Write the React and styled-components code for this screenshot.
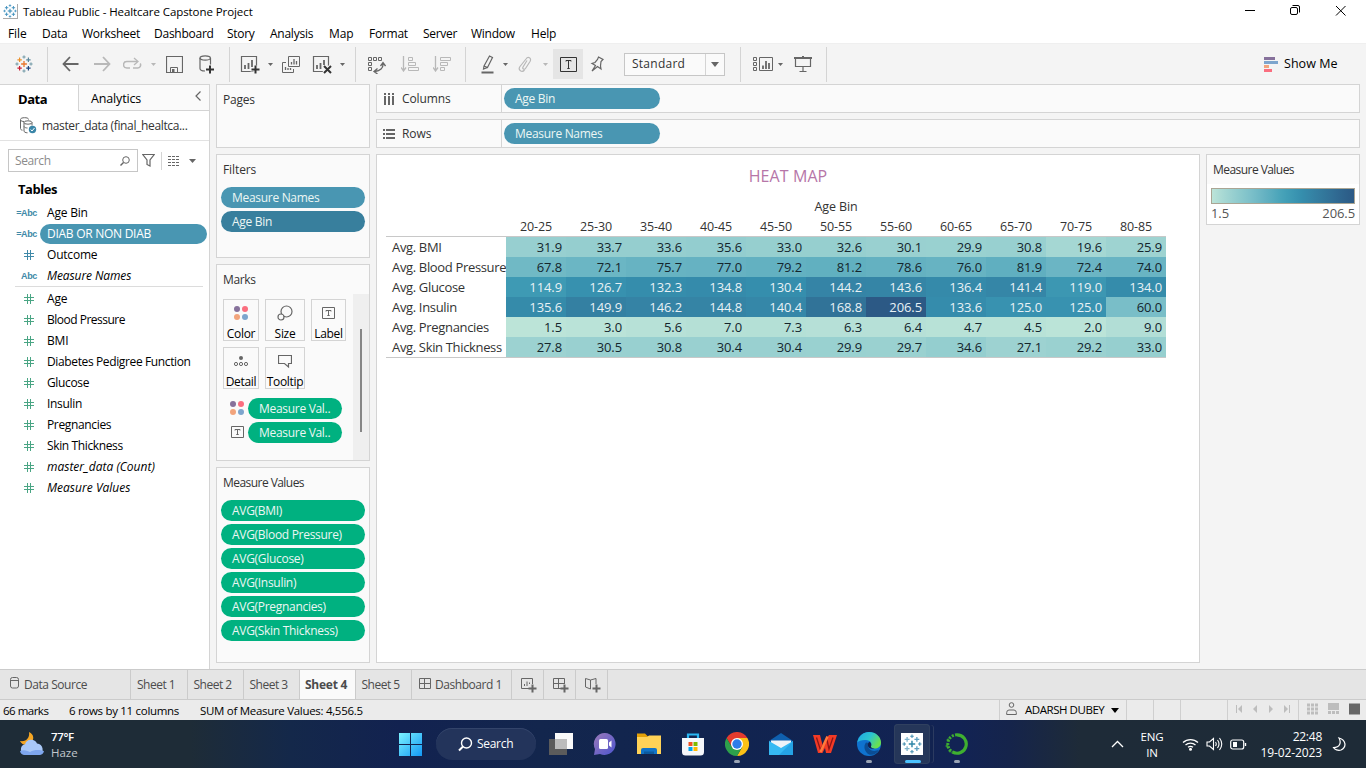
import React from "react";
import styled, { createGlobalStyle, css } from "styled-components";

const GlobalStyle = createGlobalStyle`
  * { box-sizing: border-box; }
  body { margin: 0; background: #f4f4f4; overflow: hidden; }
  svg { display: block; flex: none; }
`;

const LINE = "#d4d4d4";
const INK = "#666";

const Window = styled.div`
  width: 1366px;
  height: 768px;
  display: flex;
  flex-direction: column;
  background: #f4f4f4;
  color: #000;
  font: 12px/16px "Open Sans", "Noto Sans", sans-serif;
  letter-spacing: -0.2px;
  white-space: nowrap;
`;

/* ---------- text ---------- */
const Label = styled.span`
  flex: none;
  font-size: ${(p) => p.$size || 12}px;
  font-weight: ${(p) => p.$weight || 400};
  letter-spacing: ${(p) => (p.$track === undefined ? -0.2 : p.$track)}px;
  color: ${(p) => p.$color || "inherit"};
  margin-left: ${(p) => p.$ml || 0}px;
`;

/* ---------- title and menu ---------- */
const TitleBar = styled.header`
  height: 24px;
  flex: none;
  display: flex;
  align-items: center;
  padding: 0 2px 0 3px;
  background: #fff;
`;
const AppIcon = styled.span`
  width: 15px;
  height: 15px;
  margin: 0 5px 1px 0;
  display: grid;
  place-items: center;
  border-right: 1px solid #aaa;
  border-bottom: 1px solid #aaa;
`;
const WindowButtons = styled.div`
  margin-left: auto;
  display: flex;
  align-self: flex-start;
  svg { width: 46px; height: 22px; }
`;
const MenuBar = styled.nav`
  height: 19px;
  flex: none;
  display: flex;
  align-items: center;
  padding: 1px 0 0 8px;
  background: #fff;
`;
const MenuItem = styled.span`
  width: ${(p) => p.$w}px;
  letter-spacing: ${(p) => p.$track}px;
`;

/* ---------- toolbar ---------- */
const Toolbar = styled.div`
  height: 41px;
  flex: none;
  display: flex;
  align-items: center;
  background: #f4f4f4;
  border-top: 1px solid #efefef;
`;
const Separator = styled.span`
  width: 1px;
  height: 35px;
  flex: none;
  margin-left: ${(p) => p.$ml || 0}px;
  background: ${LINE};
`;
const Glyph = styled.svg`
  margin-left: ${(p) => p.$ml || 0}px;
  margin-top: ${(p) => p.$mt || 0}px;
  fill: none;
  stroke: ${(p) => p.$color || INK};
`;
const Brand = styled.span`
  flex: none;
  margin-left: 15px;
`;
const ToggleButton = styled.span`
  width: 30px;
  height: 30px;
  margin-left: 5px;
  flex: none;
  display: grid;
  place-items: center;
  background: #e5e5e5;
`;
const FitSelect = styled.div`
  width: 101px;
  height: 23px;
  margin-left: 20px;
  flex: none;
  display: flex;
  align-items: center;
  border: 1px solid #c6c6c6;
  background: #fafafa;
  color: #333;
`;
const SelectArrow = styled.span`
  margin-left: auto;
  width: 19px;
  height: 21px;
  display: grid;
  place-items: center;
  border-left: 1px solid ${LINE};
`;

/* ---------- workspace ---------- */
const Workspace = styled.main`
  height: 585px;
  flex: none;
  display: flex;
`;
const Sidebar = styled.aside`
  width: 210px;
  flex: none;
  background: #fff;
  border-top: 1px solid ${LINE};
  border-right: 1px solid ${LINE};
`;
const SideTabs = styled.div`
  height: 26px;
  display: flex;
`;
const SideTab = styled.div`
  flex: ${(p) => (p.$active ? "0 0 78px" : "1")};
  display: flex;
  align-items: center;
  padding: ${(p) => (p.$active ? "1px 0 0 18px" : "3px 6px 0 12px")};
  ${(p) =>
    !p.$active &&
    css`
      background: #fafafa;
      border-left: 1px solid ${LINE};
      border-bottom: 1px solid ${LINE};
    `}
`;
const SourceRow = styled.div`
  height: 30px;
  display: flex;
  align-items: center;
  padding-left: 19px;
  border-bottom: 1px solid #e2e2e2;
  color: #333;
`;
const SearchRow = styled.div`
  display: flex;
  align-items: center;
  padding: 8px 0 0 8px;
`;
const SearchBox = styled.div`
  width: 130px;
  height: 23px;
  display: flex;
  align-items: center;
  justify-content: space-between;
  padding: 0 7px 0 6px;
  border: 1px solid #c6c6c6;
  color: #8b8b8b;
  letter-spacing: -0.4px;
`;
const Thin = styled.span`
  width: 1px;
  height: 18px;
  margin-left: ${(p) => p.$ml}px;
  background: ${LINE};
`;
const SectionTitle = styled.div`
  height: 30px;
  padding: 9px 0 0 18px;
  font-size: 13px;
  font-weight: 700;
  letter-spacing: -0.45px;
`;
const Field = styled.div`
  height: 21px;
  display: flex;
  align-items: center;
  font-style: ${(p) => (p.$italic ? "italic" : "normal")};
`;
const FieldIcon = styled.span`
  width: 40px;
  flex: none;
  display: flex;
  justify-content: flex-end;
  padding-right: ${(p) => (p.$hash ? 6 : 3)}px;
  font: 700 9px/12px "Liberation Sans", sans-serif;
  letter-spacing: -0.35px;
  color: #4089a8;
`;
const FieldName = styled.span`
  height: 20px;
  line-height: 20px;
  padding-left: 7px;
  letter-spacing: ${(p) => p.$track}px;
  ${(p) =>
    p.$selected &&
    css`
      width: 167px;
      border-radius: 10px;
      background: #4996b2;
      color: #fff;
    `}
`;
const FieldRule = styled.div`
  height: 1px;
  margin: 0 6px 1px 15px;
  background: #dcdcdc;
`;

/* ---------- cards ---------- */
const CardColumn = styled.section`
  width: 154px;
  flex: none;
  margin-left: 6px;
  display: flex;
  flex-direction: column;
  gap: 6px;
`;
const Card = styled.div`
  height: ${(p) => p.$h}px;
  flex: none;
  border: 1px solid ${LINE};
  background: #fafafa;
`;
const CardTitle = styled.div`
  height: 32px;
  padding: 7px 0 0 6px;
  color: #333;
  letter-spacing: ${(p) => (p.$track === undefined ? -0.2 : p.$track)}px;
`;
const PillStack = styled.div`
  display: flex;
  flex-direction: column;
  gap: 3px;
  padding-left: 4px;
`;
const Pill = styled.span`
  width: ${(p) => p.$w || 144}px;
  height: 21px;
  flex: none;
  padding: 3px 0 0 11px;
  border-radius: 11px;
  background: ${(p) => p.$bg || "#00b180"};
  color: #ecf6f4;
  letter-spacing: -0.3px;
`;
const MarksBody = styled.div`
  height: 163px;
  display: flex;
  justify-content: space-between;
`;
const MarksMain = styled.div`
  padding: 2px 0 0 6px;
`;
const MarkGrid = styled.div`
  display: grid;
  grid-template-columns: 36px 40px 35px;
  grid-auto-rows: 42px;
  gap: 6px;
`;
const MarkButton = styled.div`
  display: flex;
  flex-direction: column;
  align-items: center;
  justify-content: space-between;
  border: 1px solid ${LINE};
  padding-top: 5px;
  line-height: 13px;
  letter-spacing: -0.3px;
`;
const MarkRow = styled.div`
  height: 24px;
  display: flex;
  align-items: center;
  gap: 3px;
  padding-left: 6px;
`;
const MarkRows = styled.div`
  padding-top: 7px;
`;
const MarkKind = styled.span`
  width: 16px;
  display: grid;
  place-items: center;
`;
const ScrollTrack = styled.div`
  width: 16px;
  margin-top: -3px;
  height: 166px;
  padding: 35px 0 0 7px;
  background: #efefef;
`;
const ScrollThumb = styled.div`
  width: 2px;
  height: 103px;
  background: #868686;
`;

/* ---------- shelves and view ---------- */
const ViewColumn = styled.section`
  width: 984px;
  margin-left: 6px;
  display: flex;
  flex-direction: column;
  gap: 6px;
`;
const Shelf = styled.div`
  height: 29px;
  flex: none;
  display: flex;
  align-items: center;
  border: 1px solid ${LINE};
  background: #fafafa;
  color: #333;
`;
const ShelfName = styled.div`
  width: 125px;
  height: 27px;
  margin-right: 2px;
  display: flex;
  align-items: center;
  gap: 7px;
  padding-left: 6px;
  border-right: 1px solid ${LINE};
`;
const ShelvesPair = styled.div`
  display: flex;
  flex-direction: column;
  gap: 6px;
`;
const ViewRow = styled.div`
  display: flex;
  align-items: flex-start;
  gap: 6px;
`;
const Sheet = styled.div`
  width: 824px;
  height: 509px;
  border: 1px solid ${LINE};
  background: #fff;
  padding: 10px 0 0 9px;
`;
const SheetTitle = styled.h1`
  margin: 0 0 0 -9px;
  height: 34px;
  font-size: 16px;
  font-weight: 400;
  line-height: 22px;
  letter-spacing: 0.1px;
  text-align: center;
  color: #b676a8;
`;
const Crosstab = styled.div`
  width: 780px;
  font-size: 13px;
  line-height: 20px;
  letter-spacing: -0.1px;
  color: #333;
`;
const AxisTitle = styled.div`
  height: 18px;
  line-height: 16px;
  margin-left: 120px;
  text-align: center;
  font-size: 12.5px;
`;
const TabRow = styled.div`
  display: grid;
  grid-template-columns: 120px repeat(11, 60px);
  height: ${(p) => (p.$head ? 19 : 20)}px;
`;
const HeadCell = styled.span`
  text-align: center;
  line-height: 19px;
  font-size: 12.5px;
`;
const Grid = styled.div`
  border-top: 1px solid #c8c8c8;
  border-bottom: 1px solid #c8c8c8;
`;
const RowLabel = styled.span`
  padding-left: 6px;
  line-height: 20px;
  letter-spacing: -0.34px;
`;
const Cell = styled.span`
  padding-right: 4px;
  line-height: 20px;
  text-align: right;
  background: ${(p) => p.$bg};
  color: ${(p) => (p.$light ? "#e8f1f5" : "#14252c")};
`;
const Legend = styled.div`
  width: 154px;
  height: 71px;
  border: 1px solid ${LINE};
  background: #fff;
`;
const LegendTitle = styled.div`
  height: 29px;
  padding: 7px 6px 0;
  background: #fafafa;
  color: #333;
  letter-spacing: -0.55px;
`;
const LegendRamp = styled.div`
  height: 16px;
  margin: 4px 4px 0;
  border: 1px solid #aaa594;
  background: linear-gradient(90deg, ${(p) => p.$stops.join(",")});
`;
const LegendEnds = styled.div`
  display: flex;
  justify-content: space-between;
  padding: 1px 4px;
  font-size: 13px;
  letter-spacing: -0.1px;
  color: #555;
`;

/* ---------- sheet tabs and status ---------- */
const SheetTabs = styled.div`
  height: 31px;
  flex: none;
  display: flex;
  border-top: 1px solid #cbcbcb;
  border-bottom: 1px solid #cbcbcb;
  background: #e5e5e5;
`;
const SheetTab = styled.div`
  width: ${(p) => p.$w}px;
  flex: none;
  display: flex;
  align-items: center;
  padding-left: ${(p) => p.$pad}px;
  border-right: 1px solid #cbcbcb;
  color: #4c4c4c;
  letter-spacing: -0.5px;
  ${(p) =>
    p.$active &&
    css`
      background: #fafafa;
      font-weight: 700;
      letter-spacing: -0.25px;
    `}
`;
const StatusBar = styled.div`
  height: 20px;
  flex: none;
  display: flex;
  align-items: center;
  padding-left: 3px;
  background: #ebebeb;
`;
const StatusText = styled.span`
  width: ${(p) => p.$w}px;
  padding-top: 2px;
  font-size: 11.5px;
  letter-spacing: ${(p) => p.$track}px;
`;
const StatusCell = styled.div`
  width: ${(p) => p.$w}px;
  height: 20px;
  display: flex;
  align-items: center;
  border-left: 1px solid #cfcfcf;
`;
const StatusRight = styled.div`
  margin-left: auto;
  display: flex;
`;

/* ---------- taskbar ---------- */
const Taskbar = styled.footer`
  height: 48px;
  flex: none;
  display: flex;
  align-items: center;
  background: linear-gradient(90deg, #1e2c37 0, #1e2c37 190px, #14284a 290px, #122250 400px, #13264d 540px, #11244f 700px, #122354 960px, #15244b 1010px, #1e2b38 1080px, #1e2b37 1366px);
  color: #fff;
`;
const Weather = styled.div`
  width: 389px;
  display: flex;
  align-items: center;
  padding-left: 19px;
`;
const Stack = styled.div`
  display: flex;
  flex-direction: column;
  align-items: ${(p) => p.$align || "flex-start"};
  width: ${(p) => p.$w || "auto"};
  margin-left: ${(p) => p.$ml || 0}px;
  padding-top: 1px;
  flex: none;
`;
const TaskSlot = styled.div`
  width: 44px;
  height: 48px;
  flex: none;
  display: flex;
  flex-direction: column;
  align-items: center;
  padding-top: 12px;
  position: relative;
`;
const TaskTile = styled.div`
  width: 36px;
  height: 40px;
  margin: -8px 0 -8px -2px;
  display: grid;
  place-items: center;
  border-radius: 4px;
  background: #253659;
  box-shadow: 4px 0 0 -1px #122350, 5px 0 0 -1px #2c3b60, inset 0 0 0 1px #30405f;
`;
const RunMark = styled.i`
  position: absolute;
  bottom: 5px;
  width: ${(p) => (p.$active ? 16 : 6)}px;
  height: 3px;
  border-radius: 2px;
  background: ${(p) => (p.$active ? "#4cc2ff" : "#9aa4b5")};
`;
const TaskSearch = styled.div`
  width: 100px;
  height: 32px;
  margin: 0 3px;
  display: flex;
  align-items: center;
  gap: 4px;
  padding-left: 22px;
  border-radius: 16px;
  background: #23345b;
  box-shadow: inset 0 1px 0 #33446a;
`;
const Tray = styled.div`
  margin-left: auto;
  display: flex;
  align-items: center;
  padding-right: 20px;
`;

/* ---------- icons ---------- */
const Icon = ({ w, h, ml, mt, color, children }) => (
  <Glyph width={w} height={h} viewBox={`0 0 ${w} ${h}`} $ml={ml} $mt={mt} $color={color}>
    {children}
  </Glyph>
);
const Caret = ({ ml, color = INK, w = 5, h = 3 }) => (
  <Icon w={w} h={h} ml={ml}>
    <path d={`M0 0H${w}L${w / 2} ${h}Z`} fill={color} stroke="none" />
  </Icon>
);
const plus = (x, y, r) => `M${x - r} ${y}H${x + r}M${x} ${y - r}V${y + r}`;
const TableauMark = ({ size, colors }) => (
  <svg width={size} height={size} viewBox="0 0 18 18" fill="none">
    <path d={plus(9, 9, 2.9)} stroke={colors[0]} strokeWidth="1.3" />
    <path d={plus(4.6, 4.8, 2.2)} stroke={colors[1]} strokeWidth="1.2" />
    <path d={plus(13.4, 4.8, 2.2)} stroke={colors[2]} strokeWidth="1.2" />
    <path d={plus(4.6, 13.2, 2.2)} stroke={colors[3]} strokeWidth="1.2" />
    <path d={plus(13.4, 13.2, 2.2)} stroke={colors[4]} strokeWidth="1.2" />
    <path d={plus(9, 2, 1.6) + plus(2, 9, 1.6) + plus(16, 9, 1.6) + plus(9, 16, 1.6)} stroke={colors[5]} strokeWidth="1" />
  </svg>
);
const Dots = () => (
  <svg width="16" height="16" viewBox="0 0 16 16">
    <circle cx="4" cy="4" r="3" fill="#86719b" />
    <circle cx="12" cy="4" r="3" fill="#fa6e7f" />
    <circle cx="4" cy="12" r="3" fill="#f2a47c" />
    <circle cx="12" cy="12" r="3" fill="#7da5cd" />
  </svg>
);
const TBox = ({ w = 13, h = 12, color = INK, mt }) => (
  <Icon w={w} h={h} color={color} mt={mt}>
    <path d={`M.5.5H${w - 0.5}V${h - 0.5}H.5Z`} />
    <path d={`M${w / 2 - 2.5} 4.5V3.5H${w / 2 + 2.5}V4.5M${w / 2} 3.5V${h - 3.5}M${w / 2 - 1.2} ${h - 3.5}H${w / 2 + 1.2}`} />
  </Icon>
);
const Hash = ({ color }) => (
  <Icon w={10} h={10} color={color}>
    <path d="M3.5 0V10M6.5 0V10M0 3.5H10M0 6.5H10" />
  </Icon>
);
const BarsBox = "M1.5 1.5H16.5V16.5H1.5Z";

const icons = {
  windows: (
    <svg width="24" height="24" viewBox="0 0 24 24">
      <defs>
        <linearGradient id="win" x1="0" y1="0" x2="1" y2="1">
          <stop offset="0" stopColor="#7cf3ff" />
          <stop offset="1" stopColor="#1398f5" />
        </linearGradient>
      </defs>
      <path fill="url(#win)" d="M0 1H11V12H0ZM12 1H23V12H12ZM0 13H11V24H0ZM12 13H23V24H12Z" />
    </svg>
  ),
  taskView: (
    <svg width="24" height="24" viewBox="0 0 24 24">
      <path fill="#fafafa" d="M6 1H24V17H6Z" />
      <path fill="#5b5b5b" d="M0 7H18V23H0Z" />
      <path fill="#bcbcbc" d="M6 7H18V17H6Z" />
    </svg>
  ),
  chat: (
    <svg width="24" height="24" viewBox="0 0 24 24">
      <defs>
        <linearGradient id="chat" x1="0" y1="0" x2="1" y2="1">
          <stop offset="0" stopColor="#9a79b8" />
          <stop offset="1" stopColor="#4d55cf" />
        </linearGradient>
      </defs>
      <path fill="url(#chat)" d="M12 1a11 11 0 1 1-5 21L1 23 2 17A11 11 0 0 1 12 1Z" />
      <rect x="6" y="7" width="9" height="10" rx="1.5" fill="#fff" />
      <path fill="#fff" d="M16 10.5 18.500 8.500V15.500L16 13.500Z" />
    </svg>
  ),
  explorer: (
    <svg width="24" height="24" viewBox="0 0 24 24">
      <path fill="#e3a008" d="M0 1.500H8L11 4.500H24V12H0Z" />
      <path fill="#ffd257" d="M0 5H10L12 3.500H24V22H0Z" />
      <path fill="#1173c7" d="M4 22V18a2 2 0 0 1 2-2H18a2 2 0 0 1 2 2V22Z" />
      <path fill="#0c5a9e" d="M7 19.500H17V22H7Z" />
    </svg>
  ),
  store: (
    <svg width="24" height="24" viewBox="0 0 24 24">
      <path d="M7 7V2.500H17V7" fill="none" stroke="#29b6f2" strokeWidth="2.200" />
      <path fill="#f5f7fa" d="M1 6H23V20a3.500 3.500 0 0 1-3.500 3.500H4.500A3.500 3.500 0 0 1 1 20Z" />
      <path fill="#f25022" d="M7.500 10H11.500V14H7.500Z" />
      <path fill="#7fba00" d="M12.500 10H16.500V14H12.500Z" />
      <path fill="#00a4ef" d="M7.500 15H11.500V19H7.500Z" />
      <path fill="#ffb900" d="M12.500 15H16.500V19H12.500Z" />
    </svg>
  ),
  chrome: (
    <svg width="24" height="24" viewBox="0 0 24 24">
      <path fill="#e33b2e" d="M1.600 6 6.800 15 12 6.500 22.400 6A12 12 0 0 0 1.600 6Z" />
      <path fill="#fbc116" d="M22.400 6A12 12 0 0 1 12 24L17.200 15 12 6Z" />
      <path fill="#2da04b" d="M1.600 6A12 12 0 0 0 12 24L17.200 15H6.800Z" />
      <circle cx="12" cy="12" r="6" fill="#fff" />
      <circle cx="12" cy="12" r="4.700" fill="#2f7de9" />
    </svg>
  ),
  mail: (
    <svg width="24" height="24" viewBox="0 0 24 24">
      <path fill="#0f5fae" d="M0 9 12 1 24 9V13H0Z" />
      <path fill="#eef3f8" d="M2 8.500H22V14L12 19 2 14Z" />
      <path fill="#36b9f3" d="M0 9 12 16 24 9V23H0Z" />
      <path fill="#1d96dd" d="M24 9V23H10Z" opacity=".65" />
    </svg>
  ),
  wps: (
    <svg width="24" height="24" viewBox="0 0 24 24" fill="none">
      <path d="M0 3H7L9.800 14 13 7 16 3H24L18 21H13L12 16 9.500 21H5Z" fill="#f23a25" />
      <path d="M3.500 5.500 7.500 18 13.500 5.500 16 17 20 5.500" stroke="#8e1517" strokeWidth="1.300" />
      <path d="M7.500 20 14.500 4.500" stroke="#ff7a3c" strokeWidth="2.500" />
    </svg>
  ),
  edge: (
    <svg width="24" height="24" viewBox="0 0 24 24">
      <defs>
        <linearGradient id="edgeTop" x1="0" y1="0" x2="1" y2=".5">
          <stop offset="0" stopColor="#1fa7e4" />
          <stop offset=".55" stopColor="#2cc4cf" />
          <stop offset="1" stopColor="#69e04f" />
        </linearGradient>
      </defs>
      <circle cx="12" cy="12" r="12" fill="#0f73cf" />
      <path fill="url(#edgeTop)" d="M.3 10.500C1.500 4 6.500 0 12 0c7 0 12 5 12 10.500 0 4-3 6-6.500 6-3 0-4-1.200-3.500-2.200 1.500-3-.5-6-5-6.300C5 7.700 1.800 8.800.3 10.500Z" />
      <path fill="#0b4d94" d="M9 10.500c-3 3.500-1.500 9.500 3 12 4.500 1 8.500-1 10-5-4 2.500-8 1.500-10-1-1.500-2-1.500-4-.5-5.500Z" />
      <path fill="#122250" d="M12.300 9.800c1.800.8 2.400 2.700 1.700 4.500-.5 1.200.8 2.200 3.500 2.200-3 1-6.500-.5-6.700-3.300 0-1.400.5-2.500 1.500-3.400Z" />
    </svg>
  ),
  anaconda: (
    <svg width="24" height="24" viewBox="0 0 24 24" fill="none" stroke="#3fb030">
      <path d="M12 2.800A9.200 9.200 0 1 1 7.500 20" strokeWidth="3.200" />
      <path d="M12 2.800A9.200 9.200 0 0 0 7.500 20" strokeWidth="3" strokeDasharray="2 1.300" />
      <circle cx="3" cy="8" r="1" strokeWidth="1" />
      <circle cx="2" cy="14" r="1" strokeWidth="1" />
      <circle cx="5" cy="19" r="1" strokeWidth="1" />
    </svg>
  ),
};

/* ---------- data ---------- */
const MENU = [
  ["File", 34, -0.1], ["Data", 40, -0.2], ["Worksheet", 72, -0.25], ["Dashboard", 73, -0.25], ["Story", 43, -0.3],
  ["Analysis", 59, -0.25], ["Map", 40, -0.1], ["Format", 54, -0.25], ["Server", 48, -0.3], ["Window", 60, -0.25], ["Help", 40, -0.2],
];
const DIMENSIONS = [
  { name: "Age Bin", icon: "=Abc", track: -0.2 },
  { name: "DIAB OR NON DIAB", icon: "=Abc", selected: true, track: -0.27 },
  { name: "Outcome", icon: "#", track: -0.2 },
  { name: "Measure Names", icon: "Abc", italic: true, track: -0.1 },
];
const MEASURES = [
  { name: "Age", track: -0.2 },
  { name: "Blood Pressure", track: -0.5 },
  { name: "BMI", track: -0.2 },
  { name: "Diabetes Pedigree Function", track: -0.37 },
  { name: "Glucose", track: -0.35 },
  { name: "Insulin", track: -0.3 },
  { name: "Pregnancies", track: -0.35 },
  { name: "Skin Thickness", track: -0.37 },
  { name: "master_data (Count)", italic: true, track: 0 },
  { name: "Measure Values", italic: true, track: 0.02 },
];
const BINS = ["20-25", "25-30", "35-40", "40-45", "45-50", "50-55", "55-60", "60-65", "65-70", "70-75", "80-85"];
const ROWS = [
  ["Avg. BMI", [31.9, 33.7, 33.6, 35.6, 33.0, 32.6, 30.1, 29.9, 30.8, 19.6, 25.9]],
  ["Avg. Blood Pressure", [67.8, 72.1, 75.7, 77.0, 79.2, 81.2, 78.6, 76.0, 81.9, 72.4, 74.0]],
  ["Avg. Glucose", [114.9, 126.7, 132.3, 134.8, 130.4, 144.2, 143.6, 136.4, 141.4, 119.0, 134.0]],
  ["Avg. Insulin", [135.6, 149.9, 146.2, 144.8, 140.4, 168.8, 206.5, 133.6, 125.0, 125.0, 60.0]],
  ["Avg. Pregnancies", [1.5, 3.0, 5.6, 7.0, 7.3, 6.3, 6.4, 4.7, 4.5, 2.0, 9.0]],
  ["Avg. Skin Thickness", [27.8, 30.5, 30.8, 30.4, 30.4, 29.9, 29.7, 34.6, 27.1, 29.2, 33.0]],
];
const RAMP = [
  "#bce4d8", "#aedcd5", "#a1d5d2", "#95cecf", "#89c8cc", "#7ec1ca", "#72bac6", "#66b2c2", "#59acbe", "#4ba5ba",
  "#419eb6", "#3b96b2", "#358ead", "#3586a7", "#347ea1", "#32779b", "#316f96", "#2f6790", "#2d608a", "#2c5985",
];
const heat = (v) => {
  const t = ((v - 1.5) / 205) * (RAMP.length - 1);
  const i = Math.min(Math.floor(t), RAMP.length - 2);
  const mix = [1, 3, 5].map((k) => {
    const a = parseInt(RAMP[i].slice(k, k + 2), 16);
    const b = parseInt(RAMP[i + 1].slice(k, k + 2), 16);
    return Math.round(a + (b - a) * (t - i));
  });
  return `rgb(${mix.join(",")})`;
};
const AVGS = ["BMI", "Blood Pressure", "Glucose", "Insulin", "Pregnancies", "Skin Thickness"];
const BLUES = ["#2f86b5", "#3f90bd", "#3f90bd", "#3f90bd", "#3f90bd", "#3f90bd"];

const FieldRow = ({ f, measure }) => (
  <Field $italic={f.italic}>
    <FieldIcon $hash={measure || f.icon === "#"}>
      {measure ? <Hash color="#4aa584" /> : f.icon === "#" ? <Hash color="#4089a8" /> : f.icon}
    </FieldIcon>
    <FieldName $selected={f.selected} $track={f.track}>{f.name}</FieldName>
  </Field>
);

const MainToolbar = () => (
  <Toolbar>
    <Brand><TableauMark size={18} colors={["#e8762c", "#eb912c", "#5b879b", "#c72037", "#1f457e", "#7099a6"]} /></Brand>
    <Separator $ml={14} />
    <Icon w={17} h={16} ml={14}><path d="M1 8H16.500M8 1 1.500 8 8 15" strokeWidth="1.800" /></Icon>
    <Icon w={17} h={16} ml={15} color="#b8b8b8"><path d="M0 8H15.500M9 1 15.500 8 9 15" strokeWidth="1.800" /></Icon>
    <Icon w={20} h={14} ml={12} color="#b8b8b8">
      <path d="M7 11H3.800a3.200 3.200 0 0 1 0-6.500H14M10 11H14.500a3 3 0 0 0 2.700-4.500" strokeWidth="1.500" />
      <path d="M11 1 15 4.500 11 8" strokeWidth="1.300" />
    </Icon>
    <Caret ml={8} color="#b8b8b8" />
    <Icon w={17} h={17} ml={10}>
      <path d="M.5.5H16.500V16.500H.5Z" strokeWidth="1.200" /><path d="M4.500 16V11.500H11.500V16" />
      <path d="M6 13H8.500V16.500H6Z" fill={INK} stroke="none" />
    </Icon>
    <Icon w={16} h={19} ml={16} mt={1}>
      <path d="M1 3V13.500C1 15 3 16 6 16M11.500 3V9.500" strokeWidth="1.200" /><ellipse cx="6.200" cy="3" rx="5.200" ry="2.200" strokeWidth="1.200" />
      <path d="M7 14.500H15M11 10.500V18.500" stroke="#333" strokeWidth="2" />
    </Icon>
    <Separator $ml={14} />
    <Icon w={20} h={19} ml={10} mt={1}>
      <path d={BarsBox} strokeWidth="1.200" />
      <path d="M5 14V10M8.500 14V8M12 12V5" strokeWidth="1.800" />
      <path d="M10.500 14.500H19.500M15.500 10.500V18.500" stroke="#f4f4f4" strokeWidth="4" />
      <path d="M11.500 14.500H19.500M15.500 10.500V18.500" stroke="#333" strokeWidth="2" />
    </Icon>
    <Caret ml={8} />
    <Icon w={18} h={17} ml={9}>
      <path d="M6.500.5H17.500V10.500H6.500ZM4 6.500H.5V16.500H11.500V13" />
      <path d="M9.500 8.500V6M12 8.500V3M14.500 8.500V5M3.500 14V11M6 14V12M8.500 14V12" strokeWidth="1.300" />
    </Icon>
    <Icon w={20} h={19} ml={12} mt={1}>
      <path d={BarsBox} strokeWidth="1.200" />
      <path d="M5 14V10M8.500 14V8M12 10V5" strokeWidth="1.800" />
      <path d="M12 11 19 18M19 11 12 18" stroke="#f4f4f4" strokeWidth="4" />
      <path d="M12 11 19 18M19 11 12 18" stroke="#333" strokeWidth="2" />
    </Icon>
    <Caret ml={8} />
    <Separator $ml={10} />
    <Icon w={19} h={18} ml={11} mt={1}>
      <path d="M1.500 1.500H4.500V4.500H1.500ZM6.500 1.500H9.500V4.500H6.500ZM11.500 1.500H14.500V4.500H11.500ZM1.500 6.500H4.500V9.500H1.500ZM1.500 11.500H4.500V14.500H1.500Z" />
      <path d="M16 7.500C16.500 12 13 15 8 15.500M13.500 10 16 6.500 18.500 10M10.500 12.500 7 15.500 10.500 18" strokeWidth="1.300" />
    </Icon>
    <Icon w={18} h={16} ml={15} color="#b8b8b8">
      <path d="M2.500 0V14M0 11.500 2.500 15 5 11.500" strokeWidth="1.300" />
      <path d="M7.500 1.500H11.500V4.500H7.500ZM7.500 6.500H14.500V9.500H7.500ZM7.500 11.500H17.500V14.500H7.500Z" />
    </Icon>
    <Icon w={18} h={16} ml={14} color="#b8b8b8">
      <path d="M2.500 0V14M0 11.500 2.500 15 5 11.500" strokeWidth="1.300" />
      <path d="M7.500 1.500H17.500V4.500H7.500ZM7.500 6.500H14.500V9.500H7.500ZM7.500 11.500H11.500V14.500H7.500Z" />
    </Icon>
    <Separator $ml={14} />
    <Icon w={13} h={19} ml={15}>
      <path d="M3 11 8.500 1 11.500 2.500 6.500 12.500ZM3 11 2.500 14 6.500 12.500" strokeWidth="1.200" />
      <path d="M.5 17.500H12.500" strokeWidth="2" />
    </Icon>
    <Caret ml={9} />
    <Icon w={14} h={16} ml={10} color="#b8b8b8">
      <path d="M9 4.500 5 11C4 13 6.500 14 7.500 12.500L12 5.500C14 2 10 0 8 3L2 10.500C-.5 14 4 17 6.500 14" strokeWidth="1.200" />
    </Icon>
    <Caret ml={11} color="#b8b8b8" />
    <ToggleButton><TBox w={17} h={15} color="#333" /></ToggleButton>
    <Icon w={14} h={16} ml={7}>
      <path d="M8.500 1 13 3.500 11 5.500 10.500 10 11 13 7.500 10.500 2 15 5.500 9.500 2 7.500 5 6.500 7.500 3.500Z" strokeWidth="1.200" />
    </Icon>
    <FitSelect><Label $ml={7} $track={0.25}>Standard</Label><SelectArrow><Caret w={8} h={5} /></SelectArrow></FitSelect>
    <Separator $ml={15} />
    <Icon w={20} h={15} ml={12}>
      <path d="M.5.5H3.500V3.500H.5ZM.5 5.500H3.500V8.500H.5ZM.5 10.500H3.500V13.500H.5ZM6.500.5H19.500V13.500H6.500Z" />
      <path d="M10 12V8.500M13 12V4M16 12V6" strokeWidth="1.800" />
    </Icon>
    <Caret ml={5} />
    <Icon w={18} h={17} ml={11}>
      <path d="M0 2H18M9 0V2" strokeWidth="2" /><path d="M1.500 3V10.500H16.500V3M9 11V15.500M5.500 15.500H12.500" strokeWidth="1.200" />
    </Icon>
    <Separator $ml={14} />
    <Icon w={14} h={15} ml={437}>
      <g stroke="none">
        <path fill="#86719b" d="M0 0H11V3H0Z" /><path fill="#7da5cd" d="M0 4H14V7H0Z" />
        <path fill="#f2a47c" d="M0 8H5V11H0Z" /><path fill="#fa6e7f" d="M0 12H8V15H0Z" />
      </g>
    </Icon>
    <Label $ml={6} $size={12.5} $track={0.05}>Show Me</Label>
  </Toolbar>
);

const DataPane = () => (
  <Sidebar>
    <SideTabs>
      <SideTab $active><Label $size={13} $weight={700} $track={-0.45}>Data</Label></SideTab>
      <SideTab>
        <Label $size={12.5} $track={-0.15}>Analytics</Label>
        <Icon w={6} h={10} ml={54} mt={-6}><path d="M5.500.5 1 5 5.500 9.500" strokeWidth="1.200" /></Icon>
      </SideTab>
    </SideTabs>
    <SourceRow>
      <Icon w={18} h={17}>
        <path d="M9.500 2.500C9.500 1 7.500.7 5.500.7S1.500 1.200 1.500 2.500V11.500C1.500 12.500 2.200 13 3.500 13.200M1.500 3C2 4.200 3.500 4.500 5 4.500" />
        <ellipse cx="9" cy="5.500" rx="4" ry="1.700" /><path d="M5 5.500V14C5 15 6.500 15.800 8.500 15.800M13 5.500V8.500M5 9.500C5.500 10.500 7 11 8.500 11" />
        <circle cx="13.500" cy="12.500" r="3.700" fill="#3a86a8" stroke="none" /><path d="M11.700 12.500 13 14 15.500 11" stroke="#fff" />
      </Icon>
      <Label $ml={5} $track={-0.35}>master_data (final_healtca...</Label>
    </SourceRow>
    <SearchRow>
      <SearchBox>
        Search
        <Icon w={10} h={10}><circle cx="6" cy="4" r="3.300" /><path d="M3.500 6.500.5 9.500" strokeWidth="1.400" /></Icon>
      </SearchBox>
      <Icon w={13} h={13} ml={4}><path d="M.8.500H12.200L8 6V12L5 10.500V6Z" strokeWidth="1.200" /></Icon>
      <Thin $ml={6} />
      <Icon w={12} h={10} ml={6}><path d="M0 .5H12M0 3.500H12M0 6.500H12M0 9.500H12" strokeDasharray="3 1" /></Icon>
      <Caret ml={9} w={7} h={4} />
    </SearchRow>
    <SectionTitle>Tables</SectionTitle>
    {DIMENSIONS.map((f) => <FieldRow key={f.name} f={f} />)}
    <FieldRule />
    {MEASURES.map((f) => <FieldRow key={f.name} f={f} measure />)}
  </Sidebar>
);

const Cards = () => (
  <CardColumn>
    <Card $h={64}><CardTitle $track={-0.25}>Pages</CardTitle></Card>
    <Card $h={104}>
      <CardTitle $track={-0.1}>Filters</CardTitle>
      <PillStack>
        <Pill $bg="#4996b2">Measure Names</Pill>
        <Pill $bg="#387f9d">Age Bin</Pill>
      </PillStack>
    </Card>
    <Card $h={197}>
      <CardTitle $track={-0.35}>Marks</CardTitle>
      <MarksBody>
        <MarksMain>
          <MarkGrid>
            <MarkButton><Dots />Color</MarkButton>
            <MarkButton>
              <Icon w={16} h={16}><circle cx="9.500" cy="6.500" r="5.500" strokeWidth="1.200" /><circle cx="4" cy="12" r="3" fill="#fafafa" strokeWidth="1.200" /></Icon>Size
            </MarkButton>
            <MarkButton><TBox mt={2} />Label</MarkButton>
            <MarkButton>
              <Icon w={14} h={16}><circle cx="7" cy="5" r="2" fill={INK} stroke="none" /><circle cx="2" cy="11" r="1.600" /><circle cx="7" cy="11" r="1.600" /><circle cx="12" cy="11" r="1.600" /></Icon>Detail
            </MarkButton>
            <MarkButton><Icon w={14} h={16}><path d="M.5 2.500H13.500V10.500H10.500V14L6.500 10.500H.5Z" strokeWidth="1.200" /></Icon>Tooltip</MarkButton>
          </MarkGrid>
          <MarkRows>
            <MarkRow><MarkKind><Dots /></MarkKind><Pill $w={94}>Measure Val..</Pill></MarkRow>
            <MarkRow><MarkKind><TBox w={13} h={12} /></MarkKind><Pill $w={94}>Measure Val..</Pill></MarkRow>
          </MarkRows>
        </MarksMain>
        <ScrollTrack><ScrollThumb /></ScrollTrack>
      </MarksBody>
    </Card>
    <Card $h={196}>
      <CardTitle $track={-0.55}>Measure Values</CardTitle>
      <PillStack>{AVGS.map((a) => <Pill key={a}>AVG({a})</Pill>)}</PillStack>
    </Card>
  </CardColumn>
);

const View = () => (
  <ViewColumn>
    <ShelvesPair>
      <Shelf>
        <ShelfName>
          <Icon w={12} h={12}><path d="M2 0V2M6 0V2M10 0V2M2 3V12M6 3V12M10 3V12" strokeWidth="2" /></Icon>
          <Label $track={-0.1}>Columns</Label>
        </ShelfName>
        <Pill $w={156} $bg="#4996b2">Age Bin</Pill>
      </Shelf>
      <Shelf>
        <ShelfName>
          <Icon w={12} h={12}><path d="M0 2H2M0 6H2M0 10H2M3 2H12M3 6H12M3 10H12" strokeWidth="2" /></Icon>
          <Label $track={-0.05}>Rows</Label>
        </ShelfName>
        <Pill $w={156} $bg="#4996b2">Measure Names</Pill>
      </Shelf>
    </ShelvesPair>
    <ViewRow>
      <Sheet>
        <SheetTitle>HEAT MAP</SheetTitle>
        <Crosstab>
          <AxisTitle>Age Bin</AxisTitle>
          <TabRow $head><span />{BINS.map((b) => <HeadCell key={b}>{b}</HeadCell>)}</TabRow>
          <Grid>
            {ROWS.map(([name, values]) => (
              <TabRow key={name}>
                <RowLabel>{name}</RowLabel>
                {values.map((v, i) => <Cell key={i} $bg={heat(v)} $light={v > 100}>{v.toFixed(1)}</Cell>)}
              </TabRow>
            ))}
          </Grid>
        </Crosstab>
      </Sheet>
      <Legend>
        <LegendTitle>Measure Values</LegendTitle>
        <LegendRamp $stops={RAMP} />
        <LegendEnds><span>1.5</span><span>206.5</span></LegendEnds>
      </Legend>
    </ViewRow>
  </ViewColumn>
);

const AddMark = () => <path d="M7.500 11.500H15.500M11.500 7.500V15.500" strokeWidth="2" />;

const Tabs = () => (
  <SheetTabs>
    <SheetTab $w={131} $pad={10}>
      <Icon w={9} h={12} mt={-3}><rect x=".5" y=".5" width="8" height="10.500" rx="2" /><path d="M.5 3.500H8.500" /></Icon>
      <Label $ml={5} $track={-0.45}>Data Source</Label>
    </SheetTab>
    <SheetTab $w={57} $pad={6}>Sheet 1</SheetTab>
    <SheetTab $w={56} $pad={5.5}>Sheet 2</SheetTab>
    <SheetTab $w={56} $pad={5.5}>Sheet 3</SheetTab>
    <SheetTab $w={56} $pad={5} $active>Sheet 4</SheetTab>
    <SheetTab $w={56} $pad={5.5}>Sheet 5</SheetTab>
    <SheetTab $w={100} $pad={7}>
      <Icon w={12} h={12} mt={-2}><path d="M.5.5H11.500V10.500H.5ZM5.500.5V10.500M.5 5.500H11.500" /></Icon>
      <Label $ml={4} $track={-0.45}>Dashboard 1</Label>
    </SheetTab>
    <SheetTab $w={32} $pad={9}>
      <Icon w={16} h={16}><path d="M8 11.500H.5V1.500H11.500V7M3.500 9V7M6 9V4.500M8.500 7V5.500" /><AddMark /></Icon>
    </SheetTab>
    <SheetTab $w={32} $pad={9}>
      <Icon w={16} h={16}><path d="M8 11.500H.5V1.500H11.500V7M5.500 1.500V11.500M.5 6.500H11.500" /><AddMark /></Icon>
    </SheetTab>
    <SheetTab $w={32} $pad={9}>
      <Icon w={16} h={16}><path d="M5.500 3 .5 1.500V10L5.500 12V3L11 1.500V7" /><AddMark /></Icon>
    </SheetTab>
  </SheetTabs>
);

const Status = () => (
  <StatusBar>
    <StatusText $w={66} $track={-0.5}>66 marks</StatusText>
    <StatusText $w={131} $track={-0.3}>6 rows by 11 columns</StatusText>
    <StatusText $track={-0.3}>SUM of Measure Values: 4,556.5</StatusText>
    <StatusRight>
      <StatusCell $w={127}>
        <Icon w={11} h={14} ml={6} mt={-3}><circle cx="5.500" cy="3" r="2.300" /><path d="M.7 12.500V10.500A2.500 2.500 0 0 1 3 8H8A2.500 2.500 0 0 1 10.300 10.500V12.500Z" /></Icon>
        <Label $ml={8} $size={11.5} $track={-0.45}>ADARSH DUBEY</Label>
        <Caret ml={7} w={8} h={5} color="#000" />
      </StatusCell>
      <StatusCell $w={27} />
      <StatusCell $w={27} />
      <StatusCell $w={47} />
      <StatusCell $w={71}>
        <Icon w={54} h={8} ml={8} mt={-2}>
          <g fill="#bdbdbd" stroke="none"><path d="M0 0H1V8H0ZM6 0V8L2 4ZM21 0V8L17 4ZM33 0V8L37 4ZM48 0V8L52 4ZM53 0H54V8H53Z" /></g>
        </Icon>
      </StatusCell>
      <StatusCell $w={68}>
        <Icon w={54} h={12} ml={8} mt={-2}>
          <path d="M0 2H11M0 6H11M0 10H11" stroke="#bdbdbd" strokeWidth="3" strokeDasharray="3 1" />
          <path d="M21 0H32V7H21ZM21 8H24V11H21ZM25 8H28V11H25ZM29 8H32V11H29Z" fill="#bdbdbd" stroke="none" />
          <path d="M42 .5H53V11.500H42Z" fill={INK} stroke="none" />
        </Icon>
      </StatusCell>
    </StatusRight>
  </StatusBar>
);

const Desktop = () => (
  <Taskbar>
    <Weather>
      <svg width="26" height="26" viewBox="0 0 26 26">
        <path d="M10 1c5 2 6 8 1 12-4 2-8 1-10-3 6 1 10-3 9-9Z" fill="#f5a623" />
        <path d="M7 24a5.500 5.500 0 0 1-1-10.800A6.500 6.500 0 0 1 18 12.500 6 6 0 0 1 20 24Z" fill="#a9c8f7" />
        <path d="M6 24a5 5 0 0 1-5-4c4-2 8 0 10 1 5-3 10-2 14-1a5 5 0 0 1-5 4Z" fill="#7ea6ee" />
      </svg>
      <Stack $ml={6}>
        <Label $size={11.5} $weight={600} $track={-0.35}>77°F</Label>
        <Label $size={11.5} $color="#c2c8cd" $track={0}>Haze</Label>
      </Stack>
    </Weather>
    <TaskSlot>{icons.windows}</TaskSlot>
    <TaskSearch>
      <Icon w={15} h={15} color="#fff"><circle cx="8.500" cy="6" r="5" strokeWidth="1.400" /><path d="M5 9.500 1 13.500" strokeWidth="2" /></Icon>
      <Label $track={-0.3}>Search</Label>
    </TaskSearch>
    <TaskSlot>{icons.taskView}</TaskSlot>
    <TaskSlot>{icons.chat}</TaskSlot>
    <TaskSlot>{icons.explorer}</TaskSlot>
    <TaskSlot>{icons.store}</TaskSlot>
    <TaskSlot>{icons.chrome}<RunMark /></TaskSlot>
    <TaskSlot>{icons.mail}</TaskSlot>
    <TaskSlot>{icons.wps}</TaskSlot>
    <TaskSlot>{icons.edge}<RunMark /></TaskSlot>
    <TaskSlot>
      <TaskTile>
        <svg width="22" height="22" viewBox="0 0 22 22"><path fill="#fff" d="M0 0H22V22H0Z" /><g transform="translate(1 1) scale(1.110)">
          <TableauMark size={18} colors={["#2f86a8", "#7fb4cc", "#5d9fc0", "#7fb4cc", "#5d9fc0", "#4590b2"]} /></g></svg>
      </TaskTile>
      <RunMark $active />
    </TaskSlot>
    <TaskSlot>{icons.anaconda}<RunMark /></TaskSlot>
    <Tray>
      <Icon w={13} h={8} color="#fff"><path d="M1 7 6.500 1.500 12 7" strokeWidth="1.300" /></Icon>
      <Stack $ml={16} $align="center" $w="24px">
        <Label $size={11.5}>ENG</Label><Label $size={11.5}>IN</Label>
      </Stack>
      <Icon w={17} h={13} ml={18} color="#fff">
        <path d="M1 4.500A11 11 0 0 1 16 4.500M3.500 7A7.500 7.500 0 0 1 13.500 7M6 9.300A4 4 0 0 1 11 9.300" strokeWidth="1.300" />
        <circle cx="8.500" cy="11.300" r="1.500" fill="#fff" stroke="none" />
      </Icon>
      <Icon w={17} h={14} ml={7} color="#fff">
        <path d="M1 5H3.500L7.500 1.500V12.500L3.500 9H1ZM9.500 5Q11 7 9.500 9M11.500 3Q14.500 7 11.500 11M13.500 1Q18 7 13.500 13" strokeWidth="1.100" />
      </Icon>
      <Icon w={17} h={11} ml={7} color="#fff">
        <rect x=".7" y="1" width="13" height="9" rx="2" strokeWidth="1.200" /><path d="M3 3H7V8H3Z" fill="#fff" stroke="none" /><path d="M15.500 4V7" strokeWidth="1.400" />
      </Icon>
      <Stack $ml={10} $align="flex-end" $w="65px">
        <Label $track={-0.25}>22:48</Label><Label $track={-0.1}>19-02-2023</Label>
      </Stack>
      <Icon w={14} h={14} ml={10} color="#fff"><path d="M7 1C14 3 15 10 9 13 6 14 2.500 12.500 1.500 10.500 8 10.500 9.500 5.500 7 1Z" strokeWidth="1.200" /></Icon>
    </Tray>
  </Taskbar>
);

export default function App() {
  return (
    <Window>
      <GlobalStyle />
      <TitleBar>
        <AppIcon><TableauMark size={14} colors={BLUES} /></AppIcon>
        <Label $size={11.5} $track={-0.08}>Tableau Public - Healtcare Capstone Project</Label>
        <WindowButtons>
          <svg viewBox="0 0 46 22" fill="none" stroke="#000"><path d="M19 10.500H29" /></svg>
          <svg viewBox="0 0 46 22" fill="none" stroke="#000"><rect x="18.500" y="7.500" width="7" height="7" rx="1.500" /><path d="M20.500 5.500H26a1.500 1.500 0 0 1 1.500 1.500V12.500" /></svg>
          <svg viewBox="0 0 46 22" fill="none" stroke="#000"><path d="M18 6 27.500 15.500M27.500 6 18 15.500" /></svg>
        </WindowButtons>
      </TitleBar>
      <MenuBar>{MENU.map(([m, w, t]) => <MenuItem key={m} $w={w} $track={t}>{m}</MenuItem>)}</MenuBar>
      <MainToolbar />
      <Workspace>
        <DataPane />
        <Cards />
        <View />
      </Workspace>
      <Tabs />
      <Status />
      <Desktop />
    </Window>
  );
}
